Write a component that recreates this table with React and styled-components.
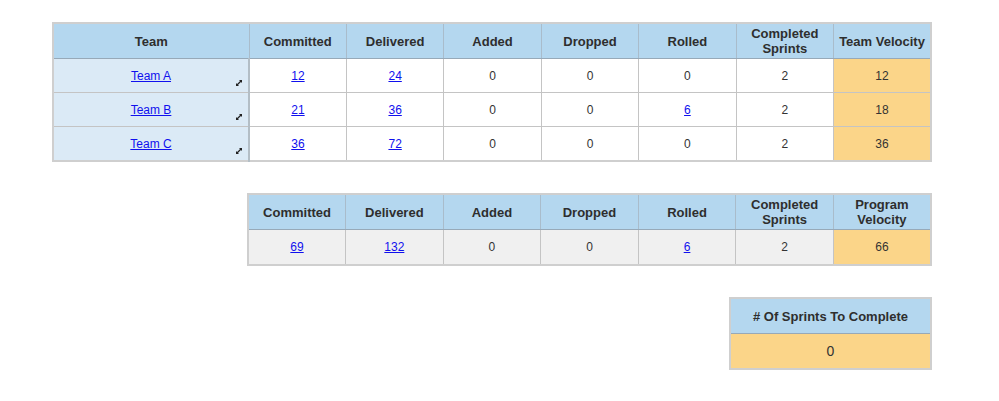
import React from 'react'
import styled, { createGlobalStyle } from 'styled-components'

const GlobalStyle = createGlobalStyle`
    body {
        margin: 0;
        background: #fff;
        font-family: "Liberation Sans", Arial, sans-serif;
        color: #333;
    }
`

const colors = {
    header: '#b4d7ef',
    team: '#dbeaf6',
    velocity: '#fbd589',
    summary: '#f0f0f0',
    line: '#c4c4c4',
    link: '#1010ee',
}

const Page = styled.div`
    display: flex;
    flex-direction: column;
    align-items: flex-end;
    gap: 31px;
    width: 880px;
    padding: 22px 0 0 52px;
`

const Table = styled.table`
    width: ${p => p.width}px;
    border-collapse: collapse;
    table-layout: fixed;
    border: 2px solid #cfcfcf;
`

const Th = styled.th`
    height: 34px;
    padding: 0 1px;
    background: ${colors.header};
    border: 1px solid #a9bccb;
    border-bottom: 1px solid #97a9b8;
    font-size: 13px;
    font-weight: bold;
    line-height: 15px;
    color: #2e2e2e;
    text-align: center;
    vertical-align: middle;
    white-space: nowrap;
`

const Td = styled.td`
    position: relative;
    height: ${p => p.tall || 33}px;
    padding: 0;
    background: ${p => p.bg || '#fff'};
    border: 1px solid ${colors.line};
    border-right-color: ${p => p.strong ? '#b3bec6' : colors.line};
    border-right-width: ${p => p.strong ? 2 : 1}px;
    font-size: ${p => p.big ? 14 : 12}px;
    text-align: center;
    vertical-align: middle;
    color: #333;
`

const Link = styled.a`
    color: ${colors.link};
    text-decoration: underline;
    font-size: ${p => p.large ? 13 : 12}px;
`

const Expand = styled.svg`
    position: absolute;
    right: 5px;
    bottom: 5px;
    width: 8px;
    height: 8px;
`

const ExpandIcon = () => (
    <Expand viewBox="0 0 8 8">
        <path d="M1.5 6.5 L6.5 1.5" stroke="#222" strokeWidth="1.2" />
        <path d="M4 1 H7 V4 Z" fill="#222" />
        <path d="M1 4 V7 H4 Z" fill="#222" />
    </Expand>
)

const metricHeads = ['Committed', 'Delivered', 'Added', 'Dropped', 'Rolled']

const teams = [
    { name: 'Team A', values: [12, 24, 0, 0, 0], links: [true, true, false, false, false], sprints: 2, velocity: 12 },
    { name: 'Team B', values: [21, 36, 0, 0, 6], links: [true, true, false, false, true], sprints: 2, velocity: 18 },
    { name: 'Team C', values: [36, 72, 0, 0, 0], links: [true, true, false, false, false], sprints: 2, velocity: 36 },
]

const Value = ({ value, link }) => link ? <Link href="#">{value}</Link> : value

const App = () => (
    <>
        <GlobalStyle />
        <Page>
            <Table width={880}>
                <colgroup>
                    <col style={{ width: 196 }} />
                    {Array.from({ length: 7 }).map((_, i) => <col key={i} />)}
                </colgroup>
                <thead>
                    <tr>
                        <Th>Team</Th>
                        {metricHeads.map(h => <Th key={h}>{h}</Th>)}
                        <Th>Completed<br />Sprints</Th>
                        <Th>Team Velocity</Th>
                    </tr>
                </thead>
                <tbody>
                    {teams.map(t => (
                        <tr key={t.name}>
                            <Td bg={colors.team} strong>
                                <Link href="#">{t.name}</Link>
                                <ExpandIcon />
                            </Td>
                            {t.values.map((v, i) => (
                                <Td key={i}><Value value={v} link={t.links[i]} /></Td>
                            ))}
                            <Td>{t.sprints}</Td>
                            <Td bg={colors.velocity}>{t.velocity}</Td>
                        </tr>
                    ))}
                </tbody>
            </Table>

            <Table width={685}>
                <thead>
                    <tr>
                        {metricHeads.map(h => <Th key={h}>{h}</Th>)}
                        <Th>Completed<br />Sprints</Th>
                        <Th>Program<br />Velocity</Th>
                    </tr>
                </thead>
                <tbody>
                    <tr>
                        <Td bg={colors.summary} tall={34}><Value value={69} link /></Td>
                        <Td bg={colors.summary} tall={34}><Value value={132} link /></Td>
                        <Td bg={colors.summary} tall={34}>0</Td>
                        <Td bg={colors.summary} tall={34}>0</Td>
                        <Td bg={colors.summary} tall={34}><Value value={6} link /></Td>
                        <Td bg={colors.summary} tall={34}>2</Td>
                        <Td bg={colors.velocity} tall={34}>66</Td>
                    </tr>
                </tbody>
            </Table>

            <Table width={203}>
                <thead>
                    <tr>
                        <Th>
                            # Of Sprints To Complete
                        </Th>
                    </tr>
                </thead>
                <tbody>
                    <tr>
                        <Td bg={colors.velocity} tall={34} big>0</Td>
                    </tr>
                </tbody>
            </Table>
        </Page>
    </>
)

export default App
